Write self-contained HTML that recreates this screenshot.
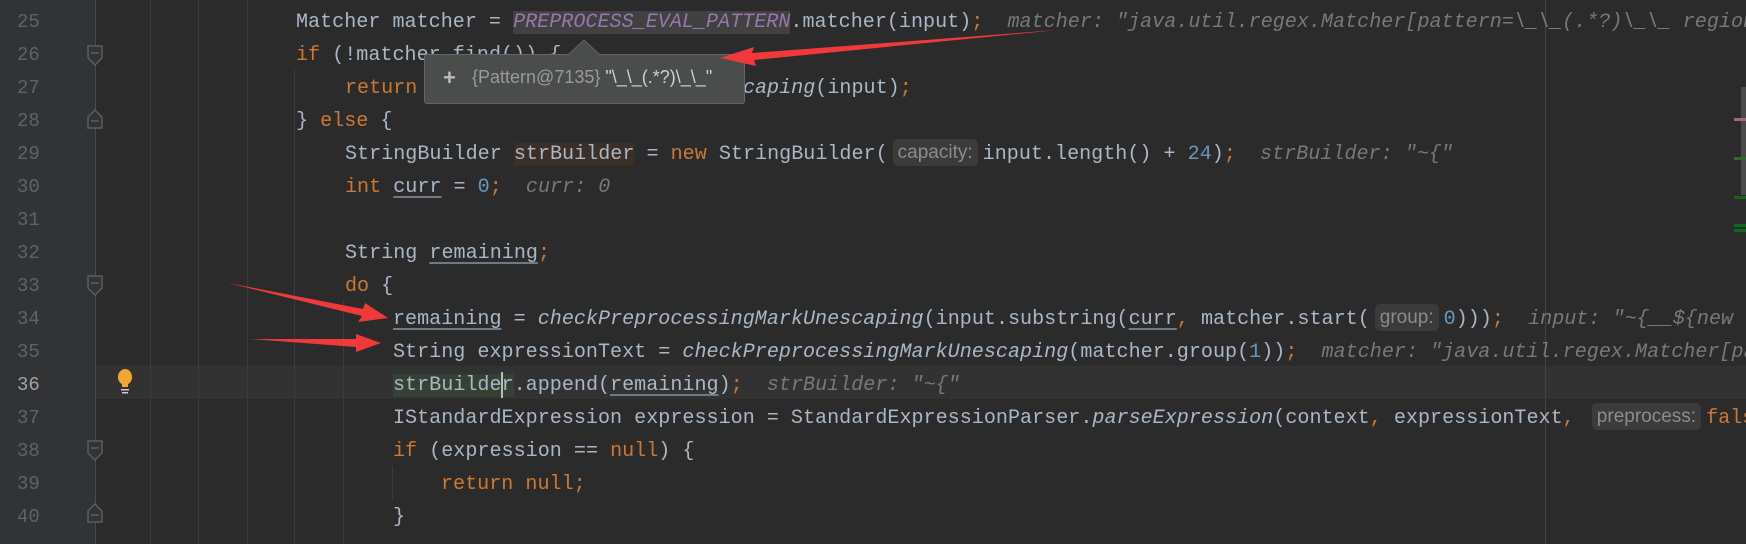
<!DOCTYPE html>
<html><head><meta charset="utf-8"><style>
*{margin:0;padding:0;box-sizing:border-box}
body{width:1746px;height:544px;overflow:hidden;background:#2b2b2b;position:relative;font-family:"Liberation Mono",monospace;font-size:20.1px;color:#a9b7c6}
.gut{position:absolute;left:0;top:0;width:95px;height:544px;background:#313335}
.ln{position:absolute;left:0;width:60px;text-align:left;padding-left:17px;color:#606366;font-size:19px;height:33px;line-height:33px}
.l{position:absolute;height:33px;line-height:33px;white-space:pre}
.k{color:#cc7832}.n{color:#6897bb}.p{color:#9876aa;font-style:italic}.i{font-style:italic}
.h{color:#787878;font-style:italic}
.u{text-decoration:underline;text-decoration-color:#6d7a88;text-underline-offset:4px}
.hint{display:inline-block;font-family:"Liberation Sans",sans-serif;font-size:19px;color:#8c8c8c;background:#3b3b3b;border-radius:5px;height:27px;line-height:27px;padding:0 5px;margin:0 5px 0 5px;vertical-align:1px}
.g{position:absolute;width:1px;background:#3b3b3b}
.cur{position:absolute;left:95px;top:366px;width:1651px;height:33px;background:#323232}
</style></head><body>
<div class="gut"></div>
<div class="cur"></div>
<div class="g" style="left:95px;top:0;height:544px;background:#4a4a4a"></div>
<div class="g" style="left:150px;top:0;height:544px"></div>
<div class="g" style="left:198px;top:0;height:544px"></div>
<div class="g" style="left:247px;top:0;height:544px"></div>
<div class="g" style="left:294px;top:105px;height:439px"></div>
<div class="g" style="left:294px;top:70px;height:33px"></div>
<div class="g" style="left:343px;top:300px;height:244px"></div>
<div class="g" style="left:392px;top:466px;height:33px"></div>
<div class="g" style="left:1545px;top:0;height:544px;background:#444"></div>
<svg style="position:absolute;left:86px;top:44px" width="18" height="30"><path d="M2 2H16V14L9 21L2 14Z" fill="#313335" stroke="#5a5d60" stroke-width="1.5"/><path d="M5 9H13" stroke="#5a5d60" stroke-width="1.5"/></svg>
<svg style="position:absolute;left:86px;top:108px" width="18" height="22"><path d="M2 20H16V9L9 2L2 9Z" fill="#313335" stroke="#5a5d60" stroke-width="1.5"/><path d="M5 13H13" stroke="#5a5d60" stroke-width="1.5"/></svg>
<svg style="position:absolute;left:86px;top:274px" width="18" height="30"><path d="M2 2H16V14L9 21L2 14Z" fill="#313335" stroke="#5a5d60" stroke-width="1.5"/><path d="M5 9H13" stroke="#5a5d60" stroke-width="1.5"/></svg>
<svg style="position:absolute;left:86px;top:439px" width="18" height="30"><path d="M2 2H16V14L9 21L2 14Z" fill="#313335" stroke="#5a5d60" stroke-width="1.5"/><path d="M5 9H13" stroke="#5a5d60" stroke-width="1.5"/></svg>
<svg style="position:absolute;left:86px;top:502px" width="18" height="22"><path d="M2 20H16V9L9 2L2 9Z" fill="#313335" stroke="#5a5d60" stroke-width="1.5"/><path d="M5 13H13" stroke="#5a5d60" stroke-width="1.5"/></svg>
<svg style="position:absolute;left:116px;top:368px" width="18" height="28"><ellipse cx="9" cy="9" rx="7" ry="8" fill="#f0a732"/><rect x="6" y="16" width="6" height="3" fill="#f0a732"/><rect x="5" y="21" width="8" height="1.5" fill="#ccc"/><rect x="6" y="24" width="6" height="1.5" fill="#ccc"/></svg>

<div class="ln" style="top:6px">25</div><div class="ln" style="top:39px">26</div><div class="ln" style="top:72px">27</div><div class="ln" style="top:105px">28</div><div class="ln" style="top:138px">29</div><div class="ln" style="top:171px">30</div><div class="ln" style="top:204px">31</div><div class="ln" style="top:237px">32</div><div class="ln" style="top:270px">33</div><div class="ln" style="top:303px">34</div><div class="ln" style="top:336px">35</div><div class="ln" style="top:369px;color:#a4a3a3">36</div><div class="ln" style="top:402px">37</div><div class="ln" style="top:435px">38</div><div class="ln" style="top:468px">39</div><div class="ln" style="top:501px">40</div>

<div class="l" style="left:296px;top:6px">Matcher matcher = <span class="p" style="background:#414141">PREPROCESS_EVAL_PATTERN</span>.matcher(input)<span class="k">;</span>  <span class="h">matcher: "java.util.regex.Matcher[pattern=\_\_(.*?)\_\_ region</span></div>
<div class="l" style="left:296px;top:39px"><span class="k">if</span> (!matcher.find()) {</div>
<div class="l" style="left:345px;top:72px"><span class="k">return</span> checkPreprocessingMarkUnes<span class="i">caping</span>(input)<span class="k">;</span></div>
<div class="l" style="left:296px;top:105px">} <span class="k">else</span> {</div>
<div class="l" style="left:345px;top:138px">StringBuilder <span style="background:#3c2f28">strBuilder</span> = <span class="k">new</span> StringBuilder(<span class="hint">capacity:</span>input.length() + <span class="n">24</span>)<span class="k">;</span>  <span class="h">strBuilder: "~{"</span></div>
<div class="l" style="left:345px;top:171px"><span class="k">int</span> <span class="u">curr</span> = <span class="n">0</span><span class="k">;</span>  <span class="h">curr: 0</span></div>
<div class="l" style="left:345px;top:237px">String <span class="u">remaining</span><span class="k">;</span></div>
<div class="l" style="left:345px;top:270px"><span class="k">do</span> {</div>
<div class="l" style="left:393px;top:303px"><span class="u">remaining</span> = <span class="i">checkPreprocessingMarkUnescaping</span>(input.substring(<span class="u">curr</span><span class="k">,</span> matcher.start(<span class="hint">group:</span><span class="n">0</span>)))<span class="k">;</span>  <span class="h">input: "~{__${new</span></div>
<div class="l" style="left:393px;top:336px">String expressionText = <span class="i">checkPreprocessingMarkUnescaping</span>(matcher.group(<span class="n">1</span>))<span class="k">;</span>  <span class="h">matcher: "java.util.regex.Matcher[pa</span></div>
<div class="l" style="left:393px;top:369px"><span style="background:#344134">strBuilder</span>.append(<span class="u">remaining</span>)<span class="k">;</span>  <span class="h">strBuilder: "~{"</span></div>
<div class="l" style="left:393px;top:402px">IStandardExpression expression = StandardExpressionParser.<span class="i">parseExpression</span>(context<span class="k">,</span> expressionText<span class="k">,</span> <span class="hint">preprocess:</span><span class="k">false</span></div>
<div class="l" style="left:393px;top:435px"><span class="k">if</span> (expression == <span class="k">null</span>) {</div>
<div class="l" style="left:441px;top:468px"><span class="k">return null;</span></div>
<div class="l" style="left:393px;top:501px">}</div>
<div style="position:absolute;left:501px;top:372px;width:2px;height:26px;background:#bbb"></div>

<div style="position:absolute;left:424px;top:54px;width:321px;height:50px;background:#4b4d4d;border:1px solid #646666;border-radius:3px"></div>
<svg style="position:absolute;left:568px;top:39px" width="32" height="17"><path d="M0 16L16 1L32 16" fill="#4b4d4d" stroke="#646666"/></svg>
<div style="position:absolute;left:443px;top:65px;font-family:'Liberation Sans',sans-serif;font-size:22px;color:#bbb;font-weight:bold">+</div>
<div style="position:absolute;left:472px;top:67px;font-family:'Liberation Sans',sans-serif;font-size:18px;color:#9a9a9a;white-space:pre">{Pattern@7135} <span style="color:#d0d0d0">"\_\_(.*?)\_\_"</span></div>

<div style="position:absolute;left:1741px;top:87px;width:5px;height:108px;background:#4a4a4a"></div>
<div style="position:absolute;left:1734px;top:118px;width:12px;height:3px;background:#a0667a"></div>
<div style="position:absolute;left:1734px;top:157px;width:12px;height:3px;background:#2d6b2d"></div>
<div style="position:absolute;left:1734px;top:196px;width:12px;height:3px;background:#0a6b1a"></div>
<div style="position:absolute;left:1734px;top:224px;width:12px;height:3px;background:#0a6b1a"></div>
<div style="position:absolute;left:1734px;top:229px;width:12px;height:3px;background:#0a6b1a"></div>

<svg style="position:absolute;left:0;top:0" width="1746" height="544">
<g fill="#f03a3a">
<path d="M1058 30 L752 53 L754 47 L720 58 L756 66 L754 60 Z"/>
<path d="M228 283 L362 316 L358 322 L388 318 L365 303 L363 309 Z"/>
<path d="M250 339 L356 339 L356 334 L381 343 L356 352 L356 347 Z"/>
</g>
</svg>
</body></html>
